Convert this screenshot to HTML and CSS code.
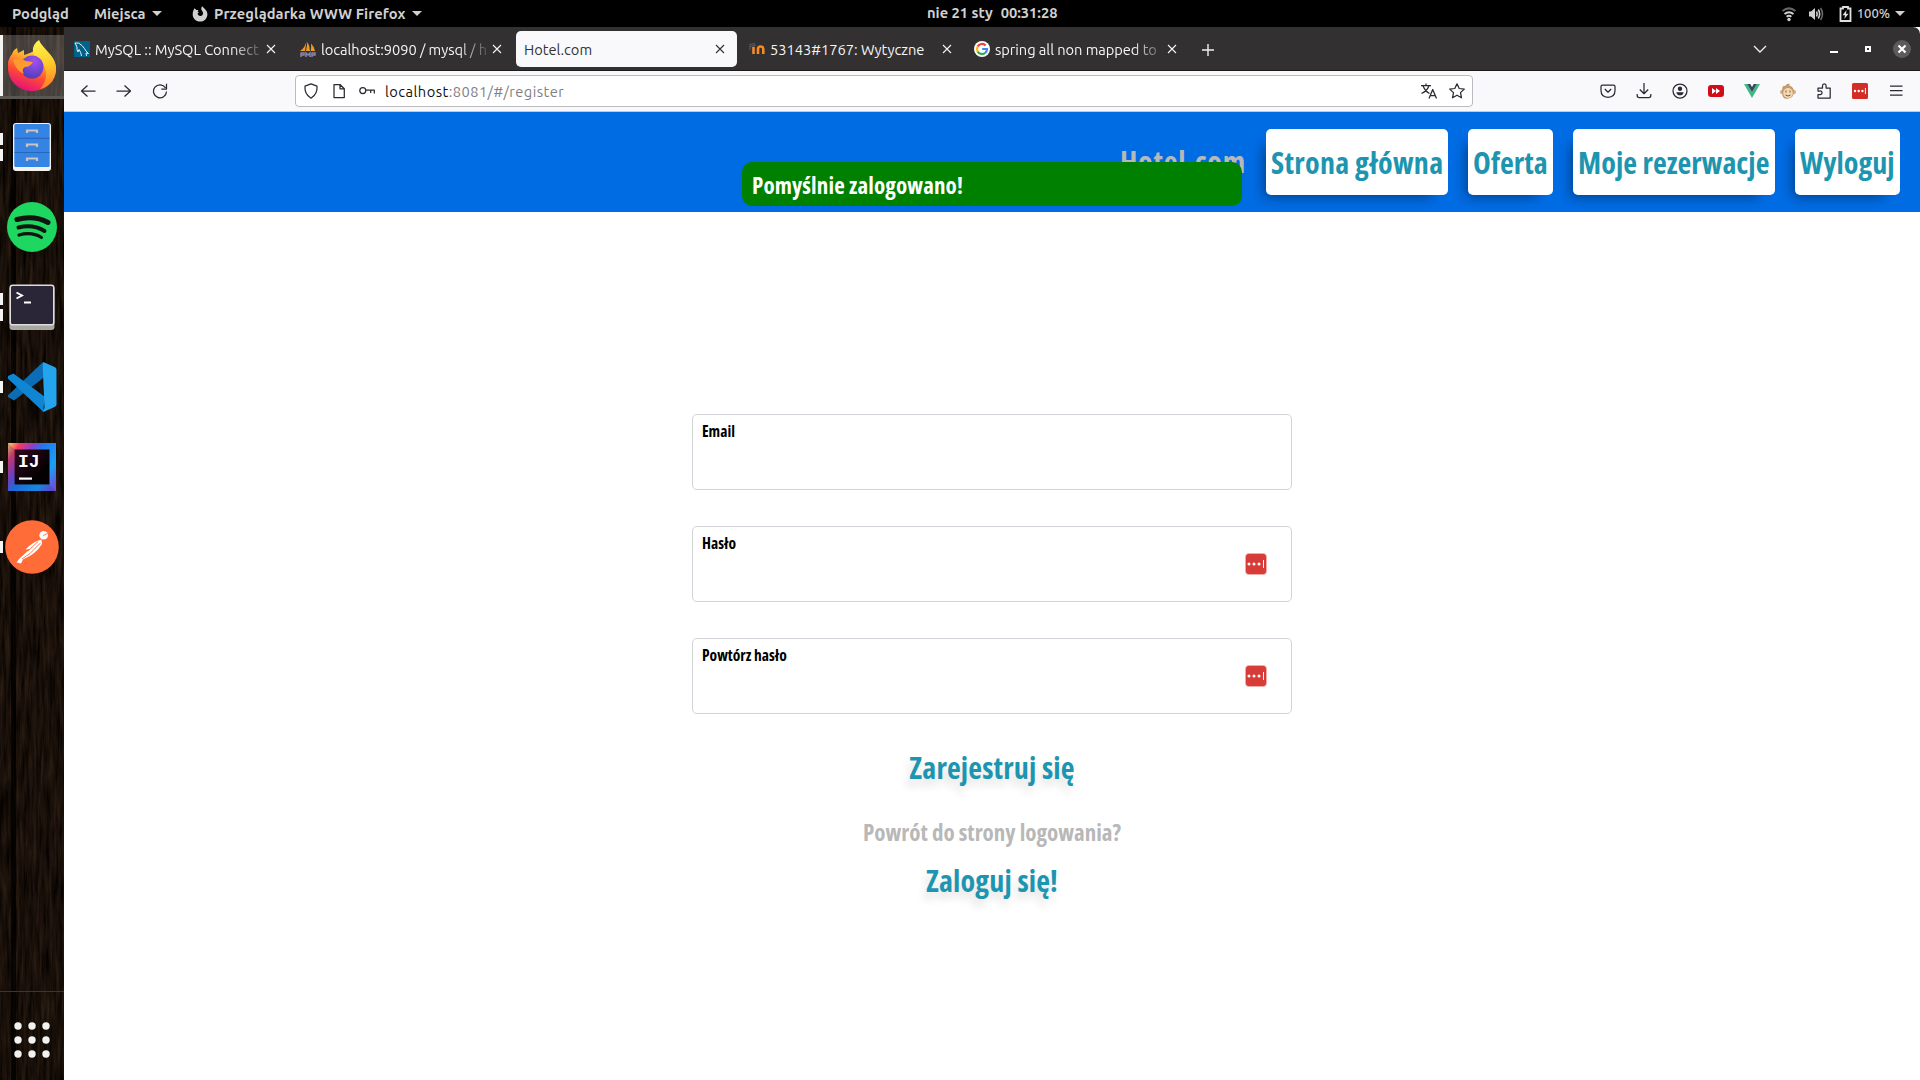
FILE: index.html
```html
<!DOCTYPE html>
<html lang="pl">
<head>
<meta charset="utf-8">
<title>Hotel.com</title>
<link rel="stylesheet" href="styles.css">
</head>
<body>
<header class="topbar">
  <div class="top-left">
    <span class="activities">Podgląd</span>
    <span class="places">Miejsca</span><i class="caret"></i>
    <svg class="app-icon" width="16" height="16" viewBox="0 0 16 16"><path d="M2.5 2.2 4.4 4 6.500 3.900 5.600 5.300 6.800 6.200 5.600 7.600C5.800 9.300 7 10.200 8.400 10.100 10.200 10 11.300 8.500 11 6.800 10.800 5.500 9.600 4.600 9.300 3.200 9.200 2 9.600 1 10.300.3 11.500 2.300 15.500 4 15.400 8.400 15.300 12.500 12 15.600 8 15.600S.7 12.400.7 8.500C.7 6 1.300 4 2.500 2.200Z" fill="#d0d0d0"/></svg>
    <span class="app">Przeglądarka WWW Firefox</span><i class="caret"></i>
  </div>
  <div class="clock"><span>nie 21 sty</span><span>00:31:28</span></div>
  <div class="top-right">
    <svg width="16" height="16" viewBox="0 0 16 16" fill="none" stroke="#d0d0d0" stroke-width="2"><path d="M1.500 5Q8-.2 14.500 5" stroke="#666"/><path d="M3.500 8Q8 4.500 12.500 8M5.600 10.700Q8 9 10.400 10.700"/><circle cx="8" cy="13.500" r="1.700" fill="#d0d0d0" stroke="none"/></svg>
    <svg class="volume" width="16" height="16" viewBox="0 0 16 16" fill="none" stroke="#d0d0d0" stroke-width="1.600"><path d="M1 5.500H3L7 2V14L3 10.500H1Z" fill="#d0d0d0" stroke="none"/><path d="M8.500 5.500Q10 8 8.500 10.500M10.300 3.500Q13 8 10.300 12.500"/><path d="M12.600 2Q16.400 8 12.600 14" stroke="#666"/></svg>
    <svg class="battery" width="13" height="16" viewBox="0 0 13 16"><path d="M4 1H9V2.500H11.500V15H1.500V2.500H4Z" fill="none" stroke="#e0e0e0" stroke-width="1.800"/><path d="M7.500 4 3.500 9.300H6L5.300 13 9.500 7.700H7Z" fill="#e0e0e0"/></svg>
    <span class="percent">100%</span><i class="caret"></i>
  </div>
</header>

<div class="desktop">
<aside class="dock">
  <svg class="wood" width="64" height="1053"><filter id="grain" x="0" y="0" width="100%" height="100%" color-interpolation-filters="sRGB"><feTurbulence type="fractalNoise" baseFrequency="0.3 0.025" numOctaves="4" seed="8"/><feColorMatrix values=".22 0 0 0 -.015  .16 0 0 0 -.02  .11 0 0 0 -.02  0 0 0 0 1"/></filter><rect width="64" height="1053" filter="url(#grain)"/><rect x="11" width="5" height="1053" fill="#000" opacity=".75"/></svg>
  <div class="launcher active"><i class="bar"></i>
    <svg width="50" height="51" viewBox="0 0 50 51"><defs><linearGradient id="fx" x1=".8" y1="0" x2=".35" y2="1"><stop offset="0" stop-color="#fff44f"/><stop offset=".35" stop-color="#ffa62b"/><stop offset=".65" stop-color="#ff4a36"/><stop offset="1" stop-color="#e3107b"/></linearGradient><linearGradient id="fy" x1=".5" y1="0" x2=".6" y2="1"><stop offset="0" stop-color="#fff44f"/><stop offset=".5" stop-color="#ffc928"/><stop offset="1" stop-color="#ff7a2a"/></linearGradient><radialGradient id="globe" cx=".6" cy=".25" r=".8"><stop offset="0" stop-color="#a150f5"/><stop offset="1" stop-color="#4a3db5"/></radialGradient></defs><path d="M5 14Q6 10 10 8L11 13 17 10 17 15Q24 13 29 10C38 8 49 17 49 28 49 42 38 51 25 51S1 41 1 28Q0 20 5 14Z" fill="url(#fx)"/><path d="M32 0C35 8 47 14 49 27 50 38 43 47 33 49 43 38 40 26 31 19 24 14 24 5 32 0Z" fill="url(#fy)"/><circle cx="25" cy="27" r="11.500" fill="url(#globe)"/><path d="M6 20Q13 17 19 21L26 22Q23 27 18 27 14 29 17 34 9 31 6 20Z" fill="#ff9a2e"/></svg>
  </div>
  <div class="launcher two"><i class="bar"></i><i class="bar"></i>
    <svg width="40" height="50" viewBox="0 0 40 50"><rect x="1" y="1" width="38" height="48" rx="3" fill="#f4f2ef"/><rect x="2.300" y="2" width="35.400" height="43" rx="1.500" fill="#3584e4"/><path d="M2.500 16.300H37.500M2.500 30.500H37.500" stroke="#2668bd" stroke-width="1.200"/><path d="M15 11V8.500H25V11M15 25V22.500H25V25M15 39V36.500H25V39" fill="none" stroke="#c8c4bf" stroke-width="2.200"/></svg>
  </div>
  <div class="launcher">
    <svg width="50" height="50" viewBox="0 0 50 50"><circle cx="25" cy="25" r="25" fill="#1ed760"/><g fill="none" stroke="#12150f" stroke-linecap="round"><path d="M10 17.500Q27 13 41 20.500" stroke-width="5"/><path d="M11.500 25.500Q26 22 37.500 29" stroke-width="4"/><path d="M12 33Q25 29.500 34.500 35.500" stroke-width="3.200"/></g></svg>
  </div>
  <div class="launcher two"><i class="bar"></i><i class="bar"></i>
    <svg width="46" height="46" viewBox="0 0 46 46"><rect x=".5" y="2" width="45" height="44" rx="3" fill="#a9a7a3"/><rect x=".5" y=".5" width="45" height="41" rx="3" fill="#dedcd8"/><rect x="2" y="2" width="42" height="38" rx="1.500" fill="#2b2637"/><path d="M7.500 8.500 13 11.500 7.500 14.500M15 18.500H22" fill="none" stroke="#fff" stroke-width="1.900"/></svg>
  </div>
  <div class="launcher"><i class="bar"></i>
    <svg width="50" height="50" viewBox="0 0 50 50"><path d="M.8 33.500 35.500.5 37.500 15 7 38.500 1 35Z" fill="#0b6db5"/><path d="M1 14 6.500 11.500 38 35 36 49.500.8 16.500Z" fill="#0f86d3"/><path d="M35.500.5Q36.500 0 37.500.4L48 5.300Q49.500 6 49.500 7.500V42.500Q49.500 44 48 44.700L37.500 49.600Q36.500 50 35.500 49.300L37.500 46Z" fill="#25a4ee"/></svg>
  </div>
  <div class="launcher"><i class="bar"></i>
    <svg width="48" height="48" viewBox="0 0 48 48"><defs><linearGradient id="ij" x1="0" y1=".1" x2="1" y2=".8"><stop offset="0" stop-color="#ffb35c"/><stop offset=".13" stop-color="#f9375f"/><stop offset=".32" stop-color="#8d3fc8"/><stop offset=".48" stop-color="#2079ef"/><stop offset=".8" stop-color="#1aa0f5"/><stop offset="1" stop-color="#6a55e0"/></linearGradient><linearGradient id="ik" x1="0" y1="0" x2="1" y2="1"><stop offset="0" stop-color="#32081f"/><stop offset=".7" stop-color="#050103"/></linearGradient></defs><rect width="48" height="48" fill="url(#ij)"/><path d="M0 48 6 42H42L48 48ZM6 6V42L0 48V0Z" fill="#123a9b" opacity=".25"/><rect x="6.500" y="6.500" width="35" height="35" fill="url(#ik)"/><text class="ij-text" x="10" y="24">IJ</text><rect x="11" y="34.500" width="13" height="2.200" fill="#fff"/></svg>
  </div>
  <div class="launcher"><i class="bar"></i>
    <svg width="54" height="54" viewBox="0 0 54 54"><circle cx="27" cy="27" r="26.800" fill="#ff6c37"/><circle cx="38.700" cy="15.300" r="4.300" fill="#fff"/><path d="M36.500 19.500Q27 22 20.500 29.500L25 29 14.500 38.500 11.500 42.500 16 43.500 18 39.500Q31 34 37 24Z" fill="#fff"/><path d="M33 21.500 23 31M35.500 23 25 33.500 17 39M38 15.500 42.500 13.500" stroke="#ff6c37" stroke-width=".9" fill="none"/></svg>
  </div>
  <div class="apps"><svg width="36" height="36" viewBox="0 0 36 36" fill="#f2f2f0"><circle cx="4" cy="4" r="3.700"/><circle cx="18" cy="4" r="3.700"/><circle cx="32" cy="4" r="3.700"/><circle cx="4" cy="18" r="3.700"/><circle cx="18" cy="18" r="3.700"/><circle cx="32" cy="18" r="3.700"/><circle cx="4" cy="32" r="3.700"/><circle cx="18" cy="32" r="3.700"/><circle cx="32" cy="32" r="3.700"/></svg></div>
</aside>

<main class="browser">
  <div class="tabs">
    <div class="tab"><svg class="fav" viewBox="0 0 16 16"><rect width="16" height="16" fill="#00618a"/><path d="M1 2Q5 1 8 4.500T12 10L14.500 12.500 12 12 12.500 15M1 2Q2 4 3 6 2.500 9 4 11L5 8.500Q7 11 7.500 15" fill="none" stroke="#e8f1f5" stroke-width="1"/></svg><span class="label fade">MySQL :: MySQL Connect</span><svg class="close" viewBox="0 0 10 10"><path d="m1 1 8 8m0-8-8 8"/></svg></div>
    <div class="tab"><svg class="fav" viewBox="0 0 16 16"><path d="M6.500 0 5 10H0Q5 7 6.500 0ZM7.500 1Q10 5 10 10H6ZM11 2.500Q14.500 6 15 10H10.800Q11.500 6 11 2.500Z" fill="#f29a1f"/><path d="M1 11.500V16M1 12H4V14H1M6 16V12L8 14 10 12V16M12 11.500V16M12 12H15V14H12" fill="none" stroke="#8487ad" stroke-width="1.500"/></svg><span class="label fade">localhost:9090 / mysql / h</span><svg class="close" viewBox="0 0 10 10"><path d="m1 1 8 8m0-8-8 8"/></svg></div>
    <div class="tab current"><span class="label">Hotel.com</span><svg class="close" viewBox="0 0 10 10"><path d="m1 1 8 8m0-8-8 8"/></svg></div>
    <div class="tab"><svg class="fav" viewBox="0 0 16 16"><path d="M0 4 5 2.500 6 4.500 1 5.500V9" fill="none" stroke="#5b554f" stroke-width="1.300"/><path d="M4.500 13V6M9 13V8Q9 5.500 11.600 5.500T14.300 8V13" fill="none" stroke="#f68a24" stroke-width="2.600"/></svg><span class="label">53143#1767: Wytyczne</span><svg class="close" viewBox="0 0 10 10"><path d="m1 1 8 8m0-8-8 8"/></svg></div>
    <div class="tab"><svg class="fav" viewBox="0 0 16 16"><circle cx="8" cy="8" r="8" fill="#fff"/><g fill="none" stroke-width="2.200"><path d="M11.600 4.500A5 5 0 0 0 3.600 5.600" stroke="#ea4335"/><path d="M3.600 5.600A5 5 0 0 0 3.600 10.400" stroke="#fbbc05"/><path d="M3.600 10.400A5 5 0 0 0 11.200 11.900" stroke="#34a853"/><path d="M11.200 11.900A5 5 0 0 0 13 8H8.200" stroke="#4285f4"/></g></svg><span class="label fade">spring all non mapped to</span><svg class="close" viewBox="0 0 10 10"><path d="m1 1 8 8m0-8-8 8"/></svg></div>
    <svg class="plus" width="14" height="14" viewBox="0 0 14 14"><path d="M7 1V13M1 7H13"/></svg>
    <div class="window-controls">
      <svg width="14" height="8" viewBox="0 0 14 8" fill="none" stroke="#eee" stroke-width="1.400"><path d="m1 1 6 6 6-6"/></svg>
      <i class="minimize"></i><i class="maximize"></i>
      <svg width="18" height="18" viewBox="0 0 18 18"><circle cx="9" cy="9" r="9" fill="#5d5c5c"/><path d="m5.500 5.500 7 7m0-7-7 7" stroke="#fff" stroke-width="2.200"/></svg>
    </div>
  </div>

  <div class="toolbar">
    <div class="nav-buttons">
      <svg class="ic" viewBox="0 0 16 16"><path d="M15.500 8H1.500M7.500 2.500 1.500 8 7.500 13.500"/></svg>
      <svg class="ic" viewBox="0 0 16 16"><path d="M.5 8H14.500M8.500 2.500 14.500 8 8.500 13.500"/></svg>
      <svg class="ic" viewBox="0 0 16 16"><path d="M13.500 4.800A6.500 6.500 0 1 0 14.500 8.500M14.500.8V6H9.300"/></svg>
    </div>
    <div class="urlbar">
      <svg class="ic" viewBox="0 0 16 16"><path d="M8 .9 14 3.200Q14.700 11 8 15.200 1.300 11 2 3.200Z"/></svg>
      <svg class="ic page" viewBox="0 0 16 16"><path d="M3 1.500H9L13.300 5.800V14.500H3ZM9 1.500V5.800H13.300"/></svg>
      <svg class="ic key" viewBox="0 0 16 16"><circle cx="3.800" cy="7.500" r="3"/><path d="M6.800 7H15.300V10.500M11.700 7V10"/></svg>
      <span class="url"><b>localhost</b>:8081/#/register</span>
      <svg class="ic" viewBox="0 0 16 16"><path d="M0 2.500H10M5 .5V2.500M2 2.700Q4 8 8.500 10.500M8 2.700Q6 8 .5 10.500M8 15.500 11.700 6.500 15.500 15.500M9.300 12.500H14"/></svg>
      <svg class="ic star" viewBox="0 0 16 16"><path d="M8 .8 10.200 5.500 15.300 6.100 11.500 9.600 12.500 14.800 8 12.200 3.500 14.800 4.500 9.600.7 6.100 5.800 5.500Z"/></svg>
    </div>
    <div class="extensions">
      <svg class="ic" viewBox="0 0 16 16"><path d="M2.500 2H13.500Q15 2 15 3.500V7.500Q15 14 8 14.300 1 14 1 7.500V3.500Q1 2 2.500 2ZM4.800 6 8 9.200 11.200 6"/></svg>
      <svg class="ic" viewBox="0 0 16 16"><path d="M8 0V10.500M3.800 6.500 8 10.700 12.200 6.500M1.200 11V12.500Q1.200 14.500 3.200 14.500H12.800Q14.800 14.500 14.800 12.500V11"/></svg>
      <svg class="ic" viewBox="0 0 16 16"><circle cx="8" cy="8" r="7"/><circle cx="8" cy="5.800" r="2.200" fill="#2b2a33" stroke="none"/><path d="M4.300 9.200H11.700Q11.200 12.300 8 12.300T4.300 9.200Z" fill="#2b2a33" stroke="none"/></svg>
      <svg class="ext" viewBox="0 0 16 16"><rect y="2" width="16" height="12" rx="3" fill="#d10d18"/><path d="M4 5 8 8 4 11ZM8 5 12 8 8 11Z" fill="#fff"/></svg>
      <svg class="ext" viewBox="0 0 16 16"><path d="M0 1H3.200L8 9.300 12.800 1H16L8 15Z" fill="#41b883"/><path d="M3.200 1H6.200L8 4 9.800 1H12.800L8 9.300Z" fill="#35495e"/></svg>
      <svg class="ext" viewBox="0 0 16 16"><circle cx="2" cy="9" r="2" fill="#d8ab7a"/><circle cx="14" cy="9" r="2" fill="#d8ab7a"/><path d="M5 3Q7 0 10 1L9 2.500Q14 3.500 14 9T8 15.700 2 9 5 3Z" fill="#c59a6c"/><ellipse cx="8" cy="10" rx="4.800" ry="4.900" fill="#f2d9b3"/><path d="M5.500 12Q8 14 10.500 12M6 7.500V9.500M10 7.500V9.500" fill="none" stroke="#76583c"/></svg>
      <svg class="ic puzzle" viewBox="0 0 16 16"><path d="M2 5H6.500V2.700Q6.500.8 8.300.8T10.100 2.700V5H14.200V15H2V11.500H4Q6 11.500 6 9.700T4 8H2Z"/></svg>
      <svg class="ext" viewBox="0 0 16 16"><rect width="16" height="16" rx="1.500" fill="#d32d27"/><g fill="#fff"><circle cx="3" cy="8" r="1.200"/><circle cx="6.700" cy="8" r="1.200"/><circle cx="10.400" cy="8" r="1.200"/><rect x="12.900" y="5" width="1" height="6"/></g></svg>
      <svg class="ic menu" viewBox="0 0 16 16"><path d="M2 3H14.500M2 7.500H14.500M2 12H14.500"/></svg>
    </div>
  </div>

  <div class="page-view">
    <nav class="site-nav">
      <span class="brand">Hotel.com</span>
      <a class="nav-link wide">Strona główna</a>
      <a class="nav-link offer">Oferta</a>
      <a class="nav-link bookings">Moje rezerwacje</a>
      <a class="nav-link logout">Wyloguj</a>
    </nav>
    <div class="toast">Pomyślnie zalogowano!</div>
    <form class="register">
      <div class="field"><label>Email</label></div>
      <div class="field"><label>Hasło</label><svg class="pass" viewBox="0 0 22 22"><rect x=".5" y=".5" width="21" height="21" rx="3.500" fill="#d83c38" stroke="#f0b5b2" stroke-width=".6"/><g fill="#fff"><circle cx="4" cy="11" r="1.500"/><circle cx="9" cy="11" r="1.500"/><circle cx="14" cy="11" r="1.500"/><rect x="18" y="7" width="1" height="8"/></g></svg></div>
      <div class="field"><label>Powtórz hasło</label><svg class="pass" viewBox="0 0 22 22"><rect x=".5" y=".5" width="21" height="21" rx="3.500" fill="#d83c38" stroke="#f0b5b2" stroke-width=".6"/><g fill="#fff"><circle cx="4" cy="11" r="1.500"/><circle cx="9" cy="11" r="1.500"/><circle cx="14" cy="11" r="1.500"/><rect x="18" y="7" width="1" height="8"/></g></svg></div>
      <a class="action">Zarejestruj się</a>
      <p class="hint">Powrót do strony logowania?</p>
      <a class="action login">Zaloguj się!</a>
    </form>
  </div>
</main>
</div>
</body>
</html>
```
FILE: styles.css
```css
* { box-sizing: border-box; }
body {
  margin: 0;
  width: 1920px;
  height: 1080px;
  overflow: hidden;
  background: #fff;
  font: 14.67px "Ubuntu", "Noto Sans", sans-serif;
}
svg { display: block; flex: none; }

/* system bar */
.topbar {
  display: flex;
  height: 27px;
  background: #000;
  color: #d0d0d0;
  font-weight: 700;
  line-height: 27px;
}
.top-left, .top-right { display: flex; align-items: center; }
.top-left { width: 927px; padding-left: 12px; }
.top-right { margin-left: auto; padding-right: 15px; }
.activities { width: 82px; }
.places { width: 58px; }
.app-icon { margin: 0 6px 0 30px; }
.app { width: 198px; letter-spacing: .1px; }
.clock { display: flex; gap: 8px; line-height: 26px; }
.caret {
  width: 0;
  height: 0;
  border: 5px solid transparent;
  border-top: 5.5px solid #d0d0d0;
  border-bottom: 0;
}
.volume { margin-left: 11px; }
.battery { margin-left: 15px; }
.percent { margin: 0 5px; font-size: 13px; font-weight: 500; }

.desktop { display: flex; height: 1053px; }

/* launcher dock */
.dock {
  position: relative;
  display: flex;
  flex-direction: column;
  flex: none;
  width: 64px;
  padding-top: 8px;
  gap: 16px;
  background: #150e09;
}
.wood { position: absolute; left: 0; top: 0; }
.launcher {
  position: relative;
  display: flex;
  align-items: center;
  justify-content: center;
  height: 64px;
}
.launcher.active {
  background: linear-gradient(#ffffff38, #ffffff38) padding-box;
  border-bottom: 3px solid #5b5854;
}
.bar { position: absolute; left: 0; top: 26px; width: 3px; height: 12px; background: #f4f4f2; }
.active .bar { top: 0; height: 61px; }
.two .bar { top: 18px; }
.two .bar + .bar { top: 34px; }
.ij-text { font: 700 18px "Liberation Mono", monospace; fill: #fff; }
.apps {
  position: relative;
  display: flex;
  justify-content: center;
  height: 89px;
  margin-top: auto;
  padding-top: 30px;
  border-top: 1px solid #3a3632;
}

/* browser chrome */
.browser { width: 1856px; background: #fff; }
.tabs {
  display: flex;
  height: 44px;
  padding-top: 4px;
  background: #323031;
  border-bottom: 1px solid #1c1a1b;
  border-radius: 0 7px 0 0;
  color: #f5f5f5;
}
.tab {
  display: flex;
  align-items: center;
  flex: none;
  width: 221px;
  height: 36px;
  margin-right: 5px;
  padding: 0 9px 0 10px;
}
.tab.current { margin-right: 2px; background: #f9f9fb; color: #333; border-radius: 5px; padding: 0 12px 0 8px; }
.current ~ .tab { margin-right: 4px; padding-right: 8px; }
.fav { width: 16px; height: 16px; margin-right: 5px; }
.label { flex: 1; white-space: nowrap; line-height: 22px; padding-top: 1px; }
.fade { letter-spacing: -.05px; mask-image: linear-gradient(to right, #000 calc(100% - 30px), #0002); }
.close { width: 10px; height: 10px; margin-left: 4px; stroke: currentColor; stroke-width: 1.1; }
.plus { margin: 12px 0 0 12px; stroke: #f0f0f0; stroke-width: 1.4; }
.window-controls { display: flex; align-items: center; height: 36px; margin-left: auto; padding-right: 9px; }
.minimize { width: 8px; height: 2px; margin: 6px 27px 0 63px; background: #fff; }
.maximize { width: 6px; height: 6px; margin-right: 22px; border: 2px solid #fff; }

.toolbar {
  display: flex;
  align-items: center;
  height: 41px;
  background: #f9f9fb;
  border-bottom: 1px solid #c9c9cc;
}
.ic { width: 16px; height: 16px; fill: none; stroke: #2b2a33; stroke-width: 1.25; stroke-linejoin: round; }
.nav-buttons { display: flex; gap: 20px; width: 231px; padding-left: 16px; }
.urlbar {
  display: flex;
  align-items: center;
  width: 1178px;
  height: 32px;
  padding: 0 7px;
  background: #fff;
  border: 1px solid #bcbcc0;
  border-radius: 4px;
}
.page { margin-left: 12px; }
.key { margin: 0 10px 0 12px; }
.url { flex: 1; color: #808085; letter-spacing: .45px; }
.url b { color: #111; font-weight: 400; }
.star { margin-left: 12px; }
.extensions { display: flex; gap: 20px; margin-left: auto; padding-right: 16px; }
.ext { width: 16px; height: 16px; }

/* page */
.page-view {
  position: relative;
  height: 968px;
  font-family: "Open Sans", sans-serif;
  font-weight: 700;
  font-stretch: 75%;
}
.site-nav {
  display: flex;
  align-items: center;
  justify-content: flex-end;
  gap: 20px;
  height: 100px;
  padding-right: 20px;
  background: #006ce4;
  font-size: 30px;
}
.brand { width: 126px; color: #b8b8b8; letter-spacing: .75px; white-space: nowrap; line-height: 66px; }
.nav-link {
  height: 66px;
  padding-left: 5px;
  border-radius: 5px;
  background: #fff;
  box-shadow: -9px 9px 12px -7px rgba(0, 0, 0, .4);
  color: #1d95b0;
  line-height: 68px;
  white-space: nowrap;
}
.wide { width: 182px; letter-spacing: .3px; }
.offer { width: 85px; letter-spacing: .1px; }
.bookings { width: 202px; letter-spacing: .05px; }
.logout { width: 105px; }
.toast {
  position: absolute;
  left: 678px;
  top: 50px;
  width: 500px;
  height: 44px;
  padding-left: 10px;
  border-radius: 10px;
  background: #008000;
  color: #fff;
  font-size: 23px;
  line-height: 46px;
  letter-spacing: .12px;
}
.register { display: flex; flex-direction: column; align-items: center; padding-top: 202px; }
.field {
  display: flex;
  justify-content: space-between;
  width: 600px;
  height: 76px;
  margin-bottom: 36px;
  padding: 6px 24px 0 9px;
  border: 1px solid #d3d3da;
  border-radius: 5px;
  font-size: 15.5px;
  line-height: 20px;
}
.pass { width: 22px; height: 22px; margin-top: 20px; }
.action {
  margin-top: -2px;
  color: #1d95b0;
  font-size: 30px;
  line-height: 40px;
  letter-spacing: .15px;
  text-shadow: -3px 7px 9px rgba(0, 0, 0, .12);
}
.hint { margin: 29px 0 16px; color: #b8b8b8; font-size: 23px; line-height: 30px; }
```
